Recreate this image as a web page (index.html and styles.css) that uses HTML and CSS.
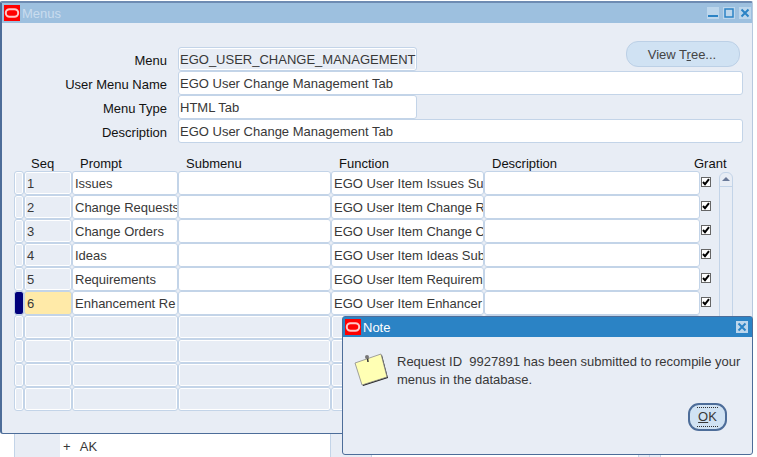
FILE: index.html
```html
<!DOCTYPE html>
<html lang="en">
<head>
<meta charset="utf-8">
<title>Menus</title>
<link rel="stylesheet" href="styles.css">
</head>
<body>
<div class="backdrop">
  <div class="bd bd-left"></div>
  <div class="bd bd-tree">+&nbsp; <span class="ak">AK</span></div>
  <div class="bd bd-mid"></div>
  <div class="bd bd-white"></div>
  <div class="bd bd-a"></div>
  <div class="bd bd-b"></div>
</div>

<section class="window">
  <header class="titlebar">
    <svg class="logo" viewBox="0 0 16 16"><rect width="16" height="16" fill="#f00"/><rect x="1.8" y="4.2" width="12.4" height="7.6" rx="3.8" fill="none" stroke="#ffc8c8" stroke-width="2"/></svg>
    <span class="title-text">Menus</span>
    <span class="win-btns">
      <svg class="win-btn" viewBox="0 0 12 12"><rect width="12" height="12" fill="#bcd6ec"/><rect x="1" y="8" width="10" height="2" fill="#2b83c5"/></svg>
      <svg class="win-btn" viewBox="0 0 12 12"><rect width="12" height="12" fill="#bcd6ec"/><rect x="2" y="2" width="8" height="8" fill="none" stroke="#2b83c5" stroke-width="1.5"/></svg>
      <svg class="win-btn" viewBox="0 0 12 12"><rect width="12" height="12" fill="#bcd6ec"/><path d="M2.5 2.5l7 7M9.5 2.5l-7 7" stroke="#2b83c5" stroke-width="2"/></svg>
    </span>
  </header>

  <div class="form">
    <div class="form-row">
      <label class="label">Menu</label>
      <div class="field field-short field-off">EGO_USER_CHANGE_MANAGEMENT</div>
      <button class="view-tree">View T<u>r</u>ee...</button>
    </div>
    <div class="form-row">
      <label class="label">User Menu Name</label>
      <div class="field field-wide">EGO User Change Management Tab</div>
    </div>
    <div class="form-row">
      <label class="label">Menu Type</label>
      <div class="field field-short">HTML Tab</div>
    </div>
    <div class="form-row">
      <label class="label">Description</label>
      <div class="field field-wide">EGO User Change Management Tab</div>
    </div>
  </div>

  <div class="heads">
    <span class="h">Seq</span>
    <span class="h">Prompt</span>
    <span class="h">Submenu</span>
    <span class="h">Function</span>
    <span class="h">Description</span>
    <span class="h">Grant</span>
  </div>

  <div class="table-area">
    <div class="rows">
      <div class="row">
        <div class="cell off"></div><div class="cell off">1</div><div class="cell">Issues</div><div class="cell"></div><div class="cell">EGO User Item Issues Sub</div><div class="cell"></div>
        <svg class="check" viewBox="0 0 10 10"><rect x=".5" y=".5" width="9" height="9" fill="#fff" stroke="#666"/><path d="M2 5l2 2.200 4-5" fill="none" stroke="#000" stroke-width="2"/></svg>
      </div>
      <div class="row">
        <div class="cell off"></div><div class="cell off">2</div><div class="cell">Change Requests</div><div class="cell"></div><div class="cell">EGO User Item Change R</div><div class="cell"></div>
        <svg class="check" viewBox="0 0 10 10"><rect x=".5" y=".5" width="9" height="9" fill="#fff" stroke="#666"/><path d="M2 5l2 2.200 4-5" fill="none" stroke="#000" stroke-width="2"/></svg>
      </div>
      <div class="row">
        <div class="cell off"></div><div class="cell off">3</div><div class="cell">Change Orders</div><div class="cell"></div><div class="cell">EGO User Item Change C</div><div class="cell"></div>
        <svg class="check" viewBox="0 0 10 10"><rect x=".5" y=".5" width="9" height="9" fill="#fff" stroke="#666"/><path d="M2 5l2 2.200 4-5" fill="none" stroke="#000" stroke-width="2"/></svg>
      </div>
      <div class="row">
        <div class="cell off"></div><div class="cell off">4</div><div class="cell">Ideas</div><div class="cell"></div><div class="cell">EGO User Item Ideas Sub</div><div class="cell"></div>
        <svg class="check" viewBox="0 0 10 10"><rect x=".5" y=".5" width="9" height="9" fill="#fff" stroke="#666"/><path d="M2 5l2 2.200 4-5" fill="none" stroke="#000" stroke-width="2"/></svg>
      </div>
      <div class="row">
        <div class="cell off"></div><div class="cell off">5</div><div class="cell">Requirements</div><div class="cell"></div><div class="cell">EGO User Item Requirem</div><div class="cell"></div>
        <svg class="check" viewBox="0 0 10 10"><rect x=".5" y=".5" width="9" height="9" fill="#fff" stroke="#666"/><path d="M2 5l2 2.200 4-5" fill="none" stroke="#000" stroke-width="2"/></svg>
      </div>
      <div class="row">
        <div class="cell marker"></div><div class="cell current">6</div><div class="cell">Enhancement Re</div><div class="cell"></div><div class="cell">EGO User Item Enhancer</div><div class="cell"></div>
        <svg class="check" viewBox="0 0 10 10"><rect x=".5" y=".5" width="9" height="9" fill="#fff" stroke="#666"/><path d="M2 5l2 2.200 4-5" fill="none" stroke="#000" stroke-width="2"/></svg>
      </div>
      <div class="row"><div class="cell off"></div><div class="cell off"></div><div class="cell off"></div><div class="cell off"></div><div class="cell off"></div><div class="cell off"></div></div>
      <div class="row"><div class="cell off"></div><div class="cell off"></div><div class="cell off"></div><div class="cell off"></div><div class="cell off"></div><div class="cell off"></div></div>
      <div class="row"><div class="cell off"></div><div class="cell off"></div><div class="cell off"></div><div class="cell off"></div><div class="cell off"></div><div class="cell off"></div></div>
      <div class="row"><div class="cell off"></div><div class="cell off"></div><div class="cell off"></div><div class="cell off"></div><div class="cell off"></div><div class="cell off"></div></div>
    </div>
    <div class="scroll">
      <div class="scroll-up"><svg class="arrow" viewBox="0 0 8 4"><path d="M4 0l4 4H0z" fill="#6a7a99"/></svg></div>
    </div>
  </div>
</section>

<section class="dialog">
  <header class="dialog-title">
    <svg class="logo" viewBox="0 0 16 16"><rect width="16" height="16" fill="#f00"/><rect x="1.8" y="4.2" width="12.4" height="7.6" rx="3.8" fill="none" stroke="#ffc8c8" stroke-width="2"/></svg>
    <span class="dialog-title-text">Note</span>
    <svg class="dialog-close" viewBox="0 0 12 12"><rect width="12" height="12" fill="#bcd6ec"/><path d="M2.5 2.5l7 7M9.5 2.5l-7 7" stroke="#2b83c5" stroke-width="2"/></svg>
  </header>
  <div class="dialog-body">
    <svg class="note-icon" viewBox="0 0 34 36">
      <path d="M2 13l26-9 6 23-25 8z" fill="#222"/>
      <path d="M1 12l26-9 6 23-25 8z" fill="#ffffb4" stroke="#8a8a8a" stroke-width=".8"/>
      <path d="M13.500 7l.5 4" stroke="#333" stroke-width="1.5"/>
      <circle cx="13" cy="6" r="2" fill="#777"/>
    </svg>
    <p class="message">Request ID&nbsp; 9927891 has been submitted to recompile your menus in the database.</p>
  </div>
  <div class="dialog-actions">
    <button class="ok"><span class="ok-inner"><u>O</u>K</span></button>
  </div>
</section>
</body>
</html>
```

FILE: styles.css
```css
* { box-sizing: border-box; }

html, body {
  margin: 0;
  height: 457px;
  overflow: hidden;
  background: #fff;
}

body {
  position: relative;
  font-family: "Liberation Sans", Arial, sans-serif;
  font-size: 13px;
  color: #383838;
}

/* Content visible beneath the floating windows */
.backdrop {
  display: flex;
  height: 457px;
  padding: 434px 0 0 14px;
}
.bd { height: 23px; }
.bd-left { width: 46px; background: #e8edf5; border-left: 1px solid #c3d4e8; }
.bd-tree { width: 271px; padding: 5px 0 0 3px; border-right: 1px solid #c3d4e8; line-height: 16px; }
.ak { margin-left: 2px; }
.bd-mid { width: 41px; background: #e8edf5; border-right: 1px solid #c3d4e8; }
.bd-white { width: 266px; }
.bd-a { width: 12px; background: #e8edf5; border: solid #c3d4e8; border-width: 0 1px; }
.bd-b { width: 11px; background: #e8edf5; border-right: 1px solid #c3d4e8; }

/* Main window */
.window {
  position: absolute;
  left: 0;
  top: 1px;
  width: 753px;
  height: 433px;
  background: #e8edf5;
  border-style: solid;
  border-color: #4d6d99;
  border-width: 2px 1px 1px 2px;
  border-top-color: #6e8bb2;
  border-right-color: #b6c8de;
  border-radius: 2px 2px 0 3px;
}

.titlebar {
  display: flex;
  align-items: center;
  height: 20px;
  padding-left: 2px;
  background: #9dc0df;
}
.logo { display: block; width: 16px; height: 16px; flex: none; }
.title-text {
  margin-left: 2px;
  color: #c9dcee;
}
.win-btns {
  display: flex;
  gap: 4px;
  margin-left: auto;
  margin-right: 1px;
}
.win-btn { display: block; width: 12px; height: 12px; }

/* Header form */
.form {
  padding: 24px 9px 0 0;
}
.form-row {
  display: flex;
  height: 24px;
}
.label {
  width: 165px;
  padding-top: 6px;
  margin-right: 11px;
  text-align: right;
  color: #111;
  line-height: 16px;
}
.field {
  height: 24px;
  padding: 4px 0 0 1px;
  line-height: 16px;
  background: #fff;
  border: 1px solid #c3d4e8;
  border-radius: 3px;
  white-space: nowrap;
  overflow: hidden;
}
.field-short { width: 239px; }
.field-wide { width: 565px; }
.field-off { background: #e8edf5; box-shadow: inset 0 0 0 1px #fff; }
.view-tree {
  width: 114px;
  height: 26px;
  margin: -6px 3px 0 auto;
  padding: 0 2px 0 0;
  font: inherit;
  color: #444;
  background: #d0e2f3;
  border: 1px solid #bcd0e6;
  border-radius: 12px;
}

/* Table */
.heads {
  display: grid;
  grid-template-columns: 49px 106px 153px 153px 202px auto;
  height: 16px;
  margin-top: 12px;
  padding: 1px 0 0 29px;
  line-height: 16px;
  color: #111;
}
.table-area {
  display: flex;
  padding-left: 12px;
}
.rows { width: 697px; }
.row {
  display: grid;
  grid-template-columns: 10px 48px 106px 153px 153px 216px 11px;
  align-items: center;
  height: 24px;
}
.cell {
  height: 24px;
  padding: 4px 0 0 2px;
  line-height: 16px;
  background: #fff;
  border: 1px solid #c3d4e8;
  border-radius: 3px;
  white-space: nowrap;
  overflow: hidden;
}
.off {
  background: #e8edf5;
  box-shadow: inset 0 0 0 1px #fff;
}
.marker { background: #00007b; }
.current { background: #ffeaa8; }
.check {
  display: block;
  width: 10px;
  height: 10px;
  margin: -2px 0 0 1px;
}
.scroll {
  width: 14px;
  height: 239px;
  margin: 1px 0 0 8px;
  border: 1px solid #c3d4e8;
  border-radius: 6px 6px 0 0;
}
.scroll-up {
  display: flex;
  justify-content: center;
  height: 14px;
  padding-top: 4px;
  border-bottom: 1px solid #c3d4e8;
}
.arrow { display: block; width: 8px; height: 4px; }

/* Note dialog */
.dialog {
  position: absolute;
  left: 342px;
  top: 316px;
  width: 411px;
  height: 139px;
  background: #e8edf5;
  border: 1px solid #4d6d99;
  border-radius: 3px;
}
.dialog-title {
  display: flex;
  align-items: center;
  height: 20px;
  padding-left: 2px;
  background: #2b83c5;
}
.dialog-title-text {
  margin-left: 2px;
  color: #fff;
}
.dialog-close {
  display: block;
  width: 12px;
  height: 12px;
  margin-left: auto;
  margin-right: 4px;
}
.dialog-body {
  display: flex;
  padding: 14px 6px 0 11px;
}
.note-icon {
  display: block;
  flex: none;
  width: 34px;
  height: 36px;
  margin-right: 9px;
}
.message {
  margin: 2px 0 0;
  line-height: 18px;
}
.dialog-actions {
  display: flex;
  justify-content: flex-end;
  padding: 14px 25px 0 0;
}
.ok {
  display: flex;
  justify-content: center;
  align-items: center;
  width: 39px;
  height: 28px;
  padding: 0;
  font: inherit;
  color: #383838;
  background: #d0e2f3;
  border: 2px solid #4d6d99;
  border-radius: 11px;
}
.ok-inner {
  width: 21px;
  height: 20px;
  line-height: 18px;
  border: dotted #333;
  border-width: 1px 0;
}
```
